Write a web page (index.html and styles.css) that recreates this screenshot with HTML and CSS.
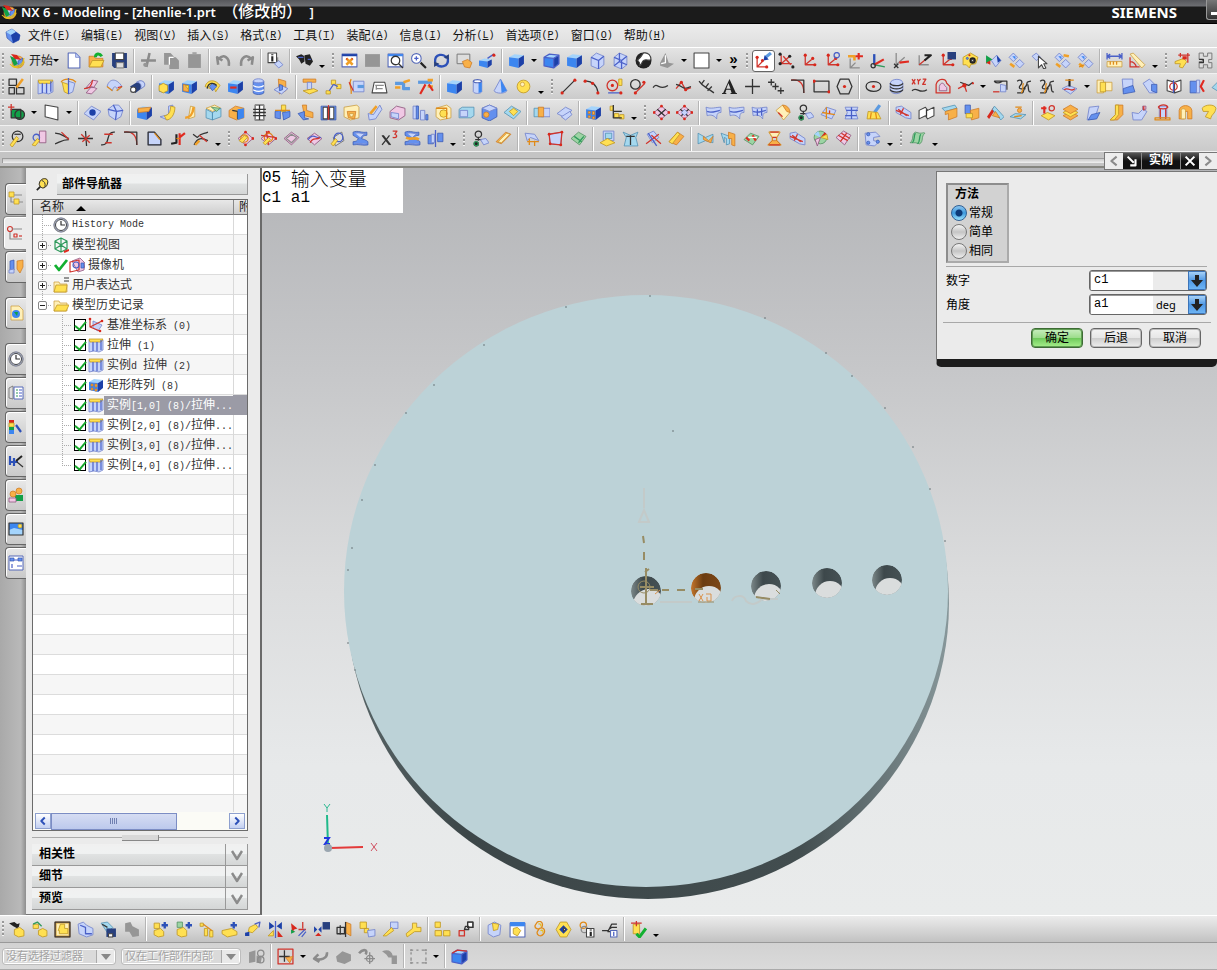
FILE: index.html
```
<!DOCTYPE html>
<html lang="zh-CN">
<head>
<meta charset="utf-8">
<title>NX 6 - Modeling</title>
<link rel="stylesheet" href="styles.css">
</head>
<body>
<div class="app">
  <header class="title">
    <span class="ico" data-icon="nx"></span>
    <h1>NX 6 - Modeling - [zhenlie-1.prt <span>（修改的） </span>]</h1>
    <span class="brand">SIEMENS</span>
    <button class="min" aria-label="最小化"></button>
  </header>

  <nav class="menu">
    <span class="ico" data-icon="part"></span>
    <button>文件<span class="lat">(<u>F</u>)</span></button>
    <button>编辑<span class="lat">(<u>E</u>)</span></button>
    <button>视图<span class="lat">(<u>V</u>)</span></button>
    <button>插入<span class="lat">(<u>S</u>)</span></button>
    <button>格式<span class="lat">(<u>R</u>)</span></button>
    <button>工具<span class="lat">(<u>T</u>)</span></button>
    <button>装配<span class="lat">(<u>A</u>)</span></button>
    <button>信息<span class="lat">(<u>I</u>)</span></button>
    <button>分析<span class="lat">(<u>L</u>)</span></button>
    <button>首选项<span class="lat">(<u>P</u>)</span></button>
    <button>窗口<span class="lat">(<u>O</u>)</span></button>
    <button>帮助<span class="lat">(<u>H</u>)</span></button>
  </nav>

  <div class="bar" role="toolbar" aria-label="标准">
    <button class="start"><span class="ico" data-icon="nx"></span>开始</button>
    <span class="tools" data-tools="v new open save | cut copy paste | undo redo | info | find V :: fit fitsel zoomwin zoom rotate pan persp | shade v shadeEdge shade wire wireDim contrast shadow v bg v >> :: *csysPick csysNodes csys csysRound csysPlane csysAbs csysXc csysSwap csysSave palette redPart parts pick partsUp partsDown | ruler protractor V :: clamp frame"></span>
  </div>
  <div class="bar" role="toolbar" aria-label="特征">
    <span class="tools" data-tools="sketch | extrude revolve sweep sweepTwo tube | boss pocket pad slot cylWire emboss | flange dart groove trapez bridge bridgeRed | cube cylinder cone sphere V :: line arc circ circTan wave spline fitcv text plus points corner rect polygon | ellipse helix xyz offset joint v project scurve scurve intersect v section wrap unwrap mirrorCv cylRed surfP"></span>
  </div>
  <div class="bar" role="toolbar" aria-label="特征操作">
    <span class="tools" data-tools="datum v plane v | hole gem | block blend blendLine chamfer draft spring trimBody split book shell thread body tubes thicken pill cubeHole pad2 | unite patch | array linkAxes V :: diamond diamondPt | sheet sheet sheetGrid rolled binocs sheetSun meshBlue broom | quilt bookOpen foldBox joinBox roof spot | axisY layers foldBlue foldGold bendArrow cage arch hook"></span>
  </div>
  <div class="bar last" role="toolbar" aria-label="曲线">
    <span class="tools" data-tools="wrench wrenchDoc trimCv cross ess corner quarter riser arcs V :: gearNet gearNetRed rhombus rhombusArc gearArc ribbon | xcubed ribbonGold mirrorB V :: binocs bar | sheetBend quadPt sheetGreen | spoon tee netRed barGold | bowtie stand sheetTeal pillar quilt rainbow rhombusGrid | cpoints V :: greenCv V"></span>
  </div>
  <div class="rail"><i></i></div>

  <main class="work">
    <nav class="tabs" aria-label="资源条">
      <button class="ico" data-icon="tAsm" aria-label="装配导航器"></button>
      <button class="ico on" data-icon="tPart" aria-label="部件导航器"></button>
      <button class="ico gap" data-icon="tReuse" aria-label="重用库"></button>
      <button class="ico gap" data-icon="tWeb" aria-label="浏览器"></button>
      <button class="ico" data-icon="clock" aria-label="历史记录"></button>
      <button class="ico" data-icon="tList" aria-label="系统材料"></button>
      <button class="ico" data-icon="tColor" aria-label="可视化"></button>
      <button class="ico" data-icon="tTools" aria-label="加工向导"></button>
      <button class="ico" data-icon="tUsers" aria-label="角色"></button>
      <button class="ico" data-icon="tScene" aria-label="场景"></button>
      <button class="ico" data-icon="tChart" aria-label="图表"></button>
    </nav>

    <aside class="panel">
      <div class="head"><span class="ico" data-icon="pin"></span><h2>部件导航器</h2></div>
      <div class="tree">
        <div class="rows">
          <table>
            <thead><tr><th>名称 <i class="up"></i></th><th class="c2">附</th></tr></thead>
            <tbody>
              <tr><td><div class="n"><span class="l1"></span><span class="ico" data-icon="clock"></span><span class="lat">History Mode</span></div></td><td></td></tr>
              <tr><td><div class="n"><span class="l1"><button class="ex" aria-label="展开"></button></span><span class="ico" data-icon="nViews"></span>模型视图</div></td><td></td></tr>
              <tr><td><div class="n"><span class="l1"><button class="ex" aria-label="展开"></button></span><span class="ico tight" data-icon="tick"></span><span class="ico" data-icon="nCam"></span>摄像机</div></td><td></td></tr>
              <tr><td><div class="n"><span class="l1"><button class="ex" aria-label="展开"></button></span><span class="ico" data-icon="folderEq"></span>用户表达式</div></td><td></td></tr>
              <tr><td><div class="n"><span class="l1 end"><button class="ex minus" aria-label="折叠"></button></span><span class="ico" data-icon="folder"></span>模型历史记录</div></td><td></td></tr>
              <tr><td><label class="n"><span class="l2"></span><input type="checkbox" checked><span class="ico tight" data-icon="nCsys"></span><span class="t">基准坐标系<span class="lat"> (0)</span></span></label></td><td></td></tr>
              <tr><td><label class="n"><span class="l2"></span><input type="checkbox" checked><span class="ico tight" data-icon="extrude"></span><span class="t">拉伸<span class="lat"> (1)</span></span></label></td><td></td></tr>
              <tr><td><label class="n"><span class="l2"></span><input type="checkbox" checked><span class="ico tight" data-icon="extrude"></span><span class="t">实例<span class="lat">d </span>拉伸<span class="lat"> (2)</span></span></label></td><td></td></tr>
              <tr><td><label class="n"><span class="l2"></span><input type="checkbox" checked><span class="ico tight" data-icon="array"></span><span class="t">矩形阵列<span class="lat"> (8)</span></span></label></td><td></td></tr>
              <tr class="sel"><td><label class="n"><span class="l2"></span><input type="checkbox" checked><span class="ico tight" data-icon="extrude"></span><span class="t">实例<span class="lat">[1,0] (8)/</span>拉伸<span class="lat">...</span></span></label></td><td></td></tr>
              <tr><td><label class="n"><span class="l2"></span><input type="checkbox" checked><span class="ico tight" data-icon="extrude"></span><span class="t">实例<span class="lat">[2,0] (8)/</span>拉伸<span class="lat">...</span></span></label></td><td></td></tr>
              <tr><td><label class="n"><span class="l2"></span><input type="checkbox" checked><span class="ico tight" data-icon="extrude"></span><span class="t">实例<span class="lat">[3,0] (8)/</span>拉伸<span class="lat">...</span></span></label></td><td></td></tr>
              <tr><td><label class="n"><span class="l2 end"></span><input type="checkbox" checked><span class="ico tight" data-icon="extrude"></span><span class="t">实例<span class="lat">[4,0] (8)/</span>拉伸<span class="lat">...</span></span></label></td><td></td></tr>
            </tbody>
          </table>
        </div>
        <div class="scroll"><button aria-label="向左" data-icon="chevL"></button><span class="thumb"></span><button class="right" aria-label="向右" data-icon="chevR"></button></div>
      </div>
      <div class="split"><i></i></div>
      <button class="sect"><span>相关性</span><span class="ico" data-icon="vee"></span></button>
      <button class="sect"><span>细节</span><span class="ico" data-icon="vee"></span></button>
      <button class="sect"><span>预览</span><span class="ico" data-icon="vee"></span></button>
    </aside>

    <section class="view">
      <svg class="model" viewBox="262 168 955 747" role="img" aria-label="圆盘模型">
        <defs>
          <linearGradient id="edge" x1="0" y1="0" x2="1" y2="0">
            <stop offset="0" stop-color="#596668"/><stop offset=".2" stop-color="#3c4648"/><stop offset=".75" stop-color="#424d4f"/><stop offset="1" stop-color="#87979a"/>
          </linearGradient>
          <linearGradient id="bore" x1="0" y1="0" x2="1" y2="0">
            <stop offset="0" stop-color="#7c8889"/><stop offset=".4" stop-color="#3d484b"/><stop offset="1" stop-color="#465255"/>
          </linearGradient>
          <linearGradient id="boreSel" x1="0" y1="0" x2="1" y2="0">
            <stop offset="0" stop-color="#c4762c"/><stop offset=".4" stop-color="#6b3c10"/><stop offset="1" stop-color="#7d4717"/>
          </linearGradient>
          <clipPath id="hole"><circle r="15"/></clipPath>
        </defs>
        <ellipse cx="648" cy="603" rx="301" ry="296" fill="url(#edge)"/>
        <ellipse cx="646" cy="591" rx="302" ry="296" fill="#bcd2d7"/>
        <g transform="translate(646 591)"><g clip-path="url(#hole)"><circle r="15" fill="url(#bore)"/><circle cx="3" cy="14" r="16" fill="#dadddd"/></g></g>
        <g transform="translate(706 588)"><g clip-path="url(#hole)"><circle r="15" fill="url(#boreSel)"/><circle cx="3" cy="13" r="15" fill="#dadddd"/></g></g>
        <g transform="translate(766 586)"><g clip-path="url(#hole)"><circle r="15" fill="url(#bore)"/><circle cx="3" cy="13" r="15" fill="#dadddd"/></g></g>
        <g transform="translate(827 583)"><g clip-path="url(#hole)"><circle r="15" fill="url(#bore)"/><circle cx="3" cy="13" r="15" fill="#dadddd"/></g></g>
        <g transform="translate(887 580)"><g clip-path="url(#hole)"><circle r="15" fill="url(#bore)"/><circle cx="3" cy="13" r="15" fill="#dadddd"/></g></g>
        <g fill="none" stroke="#c3cac9" stroke-width="2"><path d="M644 488v20M639 522l5-12 5 12zM660 602h32M732 601c2-6 12-7 14 0 5 5 12 3 16-2h16"/></g>
        <g fill="none" stroke="#978c64" stroke-width="2"><path d="M643 536l1 7M644 552v8M646 568v36M641 604h12M650 590h8M662 590h7M677 590h8M695 589h8M756 597l14 2M645 572l4-3M640 587h14"/><circle cx="644" cy="587" r="6" stroke-width="1"/></g>
        <path d="M699 594l4 7M703 594l-4 7M706 594h5v7h-4v-4M655 594l5-4" fill="none" stroke="#d9924c"/>
        <path d="M698 602h16" stroke="#978c64"/>
        <path d="M776 590l4 4" stroke="#978c64"/>
        <path d="M649 296h2M565 307h2M483 345h2M433 385h2M405 413h2M374 465h2M361 500h2M351 548h2M347 570h2M764 318h2M825 353h2M851 376h2M884 408h2M912 447h2M929 489h2M944 541h2M672 431h2M347 643h2M354 670h2" stroke="#6a777a"/>
        <g fill="none" stroke-width="2"><path d="M327 815l1 31" stroke="#1fb98a"/><path d="M330 848l33-1" stroke="#e33a3a"/><path d="M324 838h5l-4 6h5" stroke="#2137e0"/></g>
        <circle cx="328" cy="848" r="4" fill="#9aa6b0"/>
        <path d="M324 804l3 4 3-4M327 808v4" fill="none" stroke="#2ab890"/>
        <path d="M371 843l6 8M377 843l-6 8" stroke="#d05060"/>
      </svg>
      <p class="note"><span><i>05 </i>输入变量</span><span><i>c1 a1</i></span></p>
      <div class="dlgbar">
        <button aria-label="上一个" data-icon="lt"></button><button class="dark" aria-label="停靠" data-icon="arrowSE"></button><strong>实例</strong><button class="dark" aria-label="关闭" data-icon="close"></button><button aria-label="下一个" data-icon="gt"></button>
      </div>
      <form class="dlg">
        <div class="body">
          <fieldset>
            <b>方法</b>
            <label><input type="radio" name="m" checked>常规</label>
            <label><input type="radio" name="m">简单</label>
            <label><input type="radio" name="m">相同</label>
          </fieldset>
          <div class="fields">
            <div class="row"><label for="num">数字</label><span class="field"><input id="num" value="c1"><span></span><button type="button" aria-label="数字选项" data-icon="down"></button></span></div>
            <div class="row"><label for="ang">角度</label><span class="field"><input id="ang" value="a1"><span>deg</span><button type="button" aria-label="角度选项" data-icon="down"></button></span></div>
          </div>
        </div>
        <div class="acts"><button type="button" class="ok">确定</button><button type="button">后退</button><button type="button">取消</button></div>
      </form>
    </section>
  </main>

  <div class="bar foot" role="toolbar" aria-label="装配">
    <span class="tools" data-tools="aFind aOpen aBox aOutline aSave aGrey | aAdd aAdd2 aPins aPlate aMove mirrorTri constrain mirrorSave aSection aReplace aWrench aWrench2 | aSeq chain | aBody aWindow link lozenge linkInfo treeInfo | aCheck V"></span>
  </div>
  <div class="bar status" role="toolbar" aria-label="选择">
    <span class="combo"><select disabled aria-label="类型过滤器"><option>没有选择过滤器</option></select></span>
    <span class="combo wide"><select disabled aria-label="选择范围"><option>仅在工作部件内部</option></select></span>
    <span class="tools" data-tools="gLink | snap v back gBlob gCross gPipe | marquee v | cubeTop"></span>
  </div>
</div>
<script src="icons.js"></script>
</body>
</html>
```
FILE: styles.css
```
* { box-sizing: border-box; }
body {
  margin: 0;
  font: 12px/16px "Liberation Sans", "Noto Sans CJK SC", sans-serif;
  color: #222;
  background: #d6d6d6;
}
button { font: inherit; color: inherit; border: 0; padding: 0; background: none; }
h1, h2, p { margin: 0; font-weight: normal; }
svg { display: block; }
.app { display: flex; flex-direction: column; height: 100vh; min-height: 600px; overflow: hidden; }
.ico { display: inline-flex; flex: none; align-items: center; justify-content: center; }
.lat { font: 10px/16px "Liberation Mono", monospace; white-space: pre; }

.title {
  display: flex; align-items: center; height: 24px; flex: none; padding-left: 1px; gap: 4px;
  color: #fff; background: linear-gradient(#57585c, #6d6e72 6px, #1b1b1b 7px, #1b1b1b 23px, #000 23px);
}
.title h1 { flex: 1; font: 600 13px/22px "Noto Sans", "Noto Sans CJK SC", sans-serif; white-space: nowrap; }
.title h1 span { font-size: 16px; line-height: 20px; font-weight: 500; padding: 0 3px; }
.brand { font: bold 15px/22px "Noto Sans", sans-serif; margin-right: 25px; }
.min { width: 11px; height: 20px; align-self: flex-start; border: 1px solid #999; border-width: 0 0 1px 1px; border-radius: 0 0 0 3px; background: linear-gradient(#fff, #fff) 4px 12px / 8px 3px no-repeat, linear-gradient(#777, #333); }

.menu { display: flex; align-items: center; height: 24px; flex: none; padding-left: 5px; gap: 11px; background: linear-gradient(#ececec, #dedede); border-bottom: 1px solid #fff; color: #111; }
.menu > .ico { margin-right: -4px; }
.menu button { display: flex; }

.bar { display: flex; align-items: center; height: 26px; flex: none; overflow: hidden; padding-left: 5px; background: linear-gradient(#e4e4e4, #cbcbcb); border-bottom: 1px solid #f1f1f1; position: relative; }
.bar::before, .grip { content: ""; background: repeating-linear-gradient(#999 0 2px, #f4f4f4 2px 3px, transparent 3px 4px); }
.bar::before { position: absolute; left: 2px; top: 5px; width: 2px; height: 16px; }
.bar.last { background: linear-gradient(#dadada, #cacaca); }
.start { display: flex; align-items: center; gap: 4px; width: 45px; padding-left: 3px; white-space: nowrap; }
.start .ico { width: 17px; }
.tools { display: flex; align-items: center; flex: none; height: 26px; }
.tool { display: flex; align-items: center; justify-content: center; width: 23px; height: 23px; flex: none; }
.tool svg { width: 17px; height: 17px; }
.tool.pressed { background: #fff; border: 1px solid #666; border-radius: 3px; height: 22px; }
.sep { width: 2px; height: 24px; margin: 0 2px; border-left: 1px solid #b5b5b5; border-right: 1px solid #fff; }
.caret { width: 12px; height: 23px; display: flex; align-items: center; justify-content: center; }
.caret::after, .more::after { content: ""; border: 3px solid transparent; border-top-color: #000; border-bottom: 0; }
.caret.low { align-items: flex-end; padding-bottom: 4px; }
.grip { width: 2px; height: 16px; margin: 0 4px; }
.more { width: 17px; height: 23px; display: flex; flex-direction: column; align-items: center; justify-content: center; font: bold 15px/11px "Liberation Sans", sans-serif; gap: 2px; color: #000; }
.rail { flex: none; height: 16px; padding: 6px 0 0 2px; background: #c4c4c4; border-bottom: 2px solid #85857f; }
.rail i { display: block; height: 5px; background: linear-gradient(#c9c9c9, #f0f0f0); border-top: 1px solid #9b9b9b; border-left: 1px solid #9b9b9b; }

.work { display: flex; flex: 1; min-height: 0; position: relative; }
.tabs { width: 26px; flex: none; display: flex; flex-direction: column; align-items: flex-end; gap: 2px; padding-top: 15px; background: linear-gradient(90deg, #a9a9a9, #b9b9b9 80%, #8e8e8e); }
.tabs button { width: 21px; height: 32px; border: 1px solid #666; border-right: 0; border-radius: 4px 0 0 4px; background: linear-gradient(#e8e8e8, #c9c9c9); box-shadow: inset 1px 1px 0 #fff; }
.tabs .on { width: 23px; height: 34px; background: #ebebeb; border-color: #888; margin: -1px 0; }
.tabs .gap { margin-bottom: 12px; }

.panel { width: 236px; flex: none; display: flex; flex-direction: column; padding: 5px 12px 4px 6px; background: #ebebeb; border-right: 2px solid #6a6a6a; border-bottom: 1px solid #777; }
.head { display: flex; align-items: center; height: 22px; margin-bottom: 4px; }
.head .ico { width: 20px; margin-right: 5px; }
.head svg { width: 13px; height: 13px; }
.head h2, .sect { background: linear-gradient(#f0f0f0, #f0f2f2 45%, #e0e2e2 50%, #d4d6d6); }
.head h2 { flex: 1; font: bold 12px/20px "Liberation Sans", "Noto Sans CJK SC", sans-serif; padding-left: 5px; color: #000; border: 1px solid #999; border-width: 0 1px 1px 0; }
.tree { flex: 1; min-height: 0; display: flex; flex-direction: column; border: 1px solid #6b6b6b; background: #fff; }
.rows { flex: 1; min-height: 0; overflow: hidden; background: linear-gradient(#d9d9d9, #d9d9d9) 200px 15px / 1px 100% no-repeat, repeating-linear-gradient(#fff 0 19px, #dcdcdc 19px 20px, #f6f6f6 20px 39px, #dcdcdc 39px 40px) 0 15px; }
table { width: 100%; table-layout: fixed; border-collapse: separate; border-spacing: 0; }
th { height: 15px; padding: 0 0 0 7px; font-weight: normal; text-align: left; line-height: 14px; background: linear-gradient(#e8e8e8, #cfcfcf); border-bottom: 1px solid #777; white-space: nowrap; overflow: hidden; }
.c2 { width: 14px; padding-left: 5px; border-left: 1px solid #888; }
.up { display: inline-block; border: 5px solid transparent; border-bottom-color: #000; border-top: 0; margin-left: 9px; }
td { padding: 0; height: 20px; }
.n { display: flex; align-items: center; height: 20px; white-space: nowrap; color: #333; }
.n .ico { width: 16px; margin-right: 3px; }
.n .tight { margin-right: 0; }
.l1, .l2 { height: 20px; flex: none; display: flex; align-items: center; background: repeating-linear-gradient(#aaa 0 1px, transparent 1px 2px) 9px 0 / 1px 100% no-repeat, repeating-linear-gradient(90deg, #aaa 0 1px, transparent 1px 2px) 9px 10px / 10px 1px no-repeat; }
.l1 { width: 20px; }
.l2 { width: 41px; background-position: 29px 0, 29px 10px; }
.end { background-size: 1px 50%, 10px 1px; }
.ex { width: 9px; height: 9px; margin-left: 5px; border: 1px solid #888; border-radius: 2px; background: linear-gradient(#222, #222) 50% 50% / 5px 1px no-repeat, linear-gradient(#222, #222) 50% 50% / 1px 5px no-repeat, #fff; }
.minus { background: linear-gradient(#222, #222) 50% 50% / 5px 1px no-repeat, #fff; }
.n input { appearance: none; width: 12px; height: 12px; margin: 0 2px 0 0; flex: none; border: 1px solid #000; background: #fff; position: relative; }
.n input:checked::after { content: ""; position: absolute; left: 2px; top: -1px; width: 5px; height: 9px; border: solid #17a82c; border-width: 0 2px 2px 0; transform: rotate(40deg); }
.n .t { flex: 1; line-height: 19px; padding-left: 3px; }
.sel .t, .sel td + td { background: #9b9ba6; color: #fff; }
.scroll { display: flex; align-items: center; height: 18px; padding: 0 2px; flex: none; background: #fbfbf6; }
.scroll button { width: 16px; height: 16px; border: 1px solid #8ea0cf; background: linear-gradient(#fff, #c3d0f1); }
.scroll button svg { width: 14px; height: 14px; }
.scroll .right { margin-left: auto; }
.thumb { width: 60%; height: 17px; border: 1px solid #7c8dc4; background: repeating-linear-gradient(90deg, #7080b0 0 1px, transparent 1px 2px) 50% 50% / 8px 6px no-repeat, linear-gradient(#d6ddf3, #bcc9ec); }
.split { height: 13px; flex: none; display: flex; justify-content: center; padding-top: 4px; background: linear-gradient(#aaa, #aaa) 0 6px / 100% 1px no-repeat; }
.split i { width: 37px; height: 6px; background: #d8d8d8; border: 1px solid #888; border-width: 0 1px 1px 0; }
.sect { display: flex; align-items: stretch; height: 22px; flex: none; width: 100%; text-align: left; font-weight: bold; line-height: 20px; padding-left: 7px; color: #000; border: 1px solid #999; border-width: 0 1px 1px 0; }
.sect span:first-child { flex: 1; }
.sect .ico { width: 22px; border-left: 1px solid #999; }

.view { flex: 1; min-width: 0; position: relative; background: linear-gradient(#b4b5b8, #c6c7c9 27%, #dbdcdd 55%, #e7e9ea 80%, #e9ebeb); }
.model { width: 100%; height: 100%; }
.note { position: absolute; left: 0; top: 0; width: 141px; height: 45px; background: #fff; color: #000; font: 300 19px/20px "Noto Sans CJK SC", sans-serif; }
.note span { display: flex; align-items: center; height: 20px; }
.note i { font: 16px/20px "Liberation Mono", monospace; white-space: pre; }

.dlgbar { position: absolute; right: 0; top: -16px; display: flex; height: 18px; border: 1px solid #777; border-right: 0; background: #222; }
.dlgbar button { width: 18px; display: flex; align-items: center; justify-content: center; background: #ededed; }
.dlgbar svg { width: 14px; height: 14px; }
.dlgbar .dark { background: linear-gradient(#555, #111 50%); }
.dlgbar strong { width: 40px; text-align: center; line-height: 15px; color: #fff; background: linear-gradient(#555, #111 50%); border: 1px solid #888; border-width: 0 1px; }
.dlg { position: absolute; right: 0; top: 3px; width: 281px; background: #ebebeb; border: 1px solid #777; border-right: 0; border-bottom: 8px solid #1c1c1c; border-radius: 0 0 5px 5px; color: #000; }
.body { padding: 11px 10px 0 9px; }
fieldset { margin: 0; width: 63px; height: 80px; padding: 1px 3px; border: 2px solid #999; border-color: #8d8d8d #aaa #aaa #8d8d8d; background: #d2d2d2; display: flex; flex-direction: column; }
fieldset b { padding-left: 4px; height: 18px; line-height: 16px; }
fieldset label { display: flex; align-items: center; height: 19px; gap: 2px; white-space: nowrap; }
fieldset input { appearance: none; width: 16px; height: 16px; margin: 0; flex: none; border: 1px solid #777; border-radius: 50%; background: linear-gradient(#f4f4f4, #c4c4c4 50%, #eee); }
fieldset input:checked { background: radial-gradient(circle, #0d3a78 0 3px, transparent 4px), linear-gradient(#8cc4ee, #3d9ade 50%, #9be0fb); border-color: #2f5f94; }
.fields { border-top: 1px solid #a8a8a8; margin-top: 3px; padding: 3px 0 7px; display: flex; flex-direction: column; gap: 3px; }
.row { display: flex; justify-content: space-between; align-items: center; height: 21px; }
.field { display: flex; width: 118px; height: 21px; border: 1px solid #666; border-radius: 3px; overflow: hidden; box-shadow: inset 1px 1px 0 #999; }
.field input { width: 62px; border: 0; padding: 0 0 2px 3px; font: 12px "Liberation Mono", monospace; margin: 1px 0 0 1px; min-width: 0; outline: 0; }
.field span { flex: 1; padding-left: 3px; font: 11px/20px "Noto Sans", sans-serif; }
.field button { width: 18px; display: flex; align-items: center; justify-content: center; background: linear-gradient(#a8d2f8, #4f98e4 50%, #6db4f4); border: 1px solid #3c74b8; }
.acts { display: flex; justify-content: flex-end; gap: 7px; margin: 0 6px; padding: 5px 10px 11px 0; border-top: 1px solid #a8a8a8; }
.acts button { width: 52px; height: 20px; line-height: 17px; border: 1px solid #666; border-radius: 4px; background: linear-gradient(#f4f4f4, #e6e6e6 50%, #cecece 52%, #eee); box-shadow: inset 0 0 0 1px #bbb; }
.acts .ok { background: linear-gradient(#c9eec0, #9bdc8a 50%, #6fca5c 52%, #a8f08c); border-color: #3d6b34; box-shadow: inset 0 0 0 1px #5f9c53; }

.foot { height: 28px; border-top: 1px solid #fff; background: linear-gradient(#ececec, #c2c2c2); border-bottom: 1px solid #999; }
.status { height: 27px; padding-left: 3px; background: linear-gradient(#d2d2d2, #dadada); border-bottom: 1px solid #aaa; }
.status::before { display: none; }
.combo { position: relative; display: flex; width: 112px; height: 15px; margin-right: 7px; border: 1px solid #fff; border-radius: 3px; box-shadow: 0 0 0 1px #bdbdbd; }
.wide { width: 118px; margin-right: 5px; }
.combo select { appearance: none; width: 100%; border: 0; padding: 0 18px 0 2px; background: #dadada; color: #a3a3a3; opacity: 1; text-shadow: 1px 1px 0 #fff; font: 11px/13px "Liberation Sans", "Noto Sans CJK SC", sans-serif; }
.combo::before { content: ""; position: absolute; right: 0; top: 0; width: 17px; height: 13px; background: #e9e9e9; border-left: 1px solid #aaa; z-index: 1; }
.combo::after { content: ""; position: absolute; right: 3px; top: 4px; border: 5px solid transparent; border-top: 6px solid #888; border-bottom: 0; z-index: 1; }

/* icon paints */
.i path, .i circle { fill: none; stroke-width: 1.2; stroke-linejoin: round; }
.i .sk { stroke: #333; } .i .sr { stroke: #d0342c; } .i .sb { stroke: #4a60c8; } .i .sg { stroke: #2f9a5c; }
.i .so { stroke: #e08a18; } .i .sn { stroke: #8b8b8b; } .i .sw { stroke: #fff; } .i .sy { stroke: #e6c020; }
.i .tk { stroke: #222; stroke-width: 2; } .i .tr { stroke: #e02a20; stroke-width: 2; } .i .tb { stroke: #2c50b8; stroke-width: 2.2; }
.i .tn { stroke: #8b8b8b; stroke-width: 2.4; } .i .tg { stroke: #12b030; stroke-width: 2.8; } .i .tw { stroke: #fff; stroke-width: 2.4; }
.i .to { stroke: #f0a028; stroke-width: 2.4; } .i .tt { stroke: #5c9ae0; stroke-width: 3; }
.i .fk { fill: #222; } .i .fr { fill: #d8281c; } .i .fn { fill: #969696; } .i .fg { fill: #12a048; }
.i .fb { fill: #6490ee; stroke: #3858b0; stroke-width: 0.7; }
.i .fd { fill: #28407e; } .i .b1 { fill: #a4d4fc; } .i .b2 { fill: #3c86f0; } .i .b3 { fill: #1c40a8; }
.i .fl { fill: #c6d4fa; stroke: #7484cc; stroke-width: 0.8; }
.i .ft { fill: #a4d8ee; stroke: #4c8cb0; stroke-width: 0.7; }
.i .fy { fill: #ffe052; stroke: #c09a28; stroke-width: 0.8; }
.i .fo { fill: #f8b048; stroke: #cc7824; stroke-width: 0.7; }
.i .fc { fill: #fff0b8; stroke: #c89838; stroke-width: 0.7; }
.i .fp { fill: #f0c8e4; stroke: #905880; stroke-width: 0.8; }
.i .fe { fill: #9cd4a4; stroke: #4c8c5c; stroke-width: 0.7; }
.i .fw { fill: #fff; stroke: #444; stroke-width: 1; }
.i .fs { fill: #fff; stroke: #5468b8; stroke-width: 1; }
.i .fq { fill: #ddd; stroke: #777; stroke-width: 0.9; }
```
FILE: icons.js
```
/* Each icon is a list of "paint geometry" parts on a 16x16 grid.
   "o x y r" is a circle, "@name" includes another icon, anything else is path data. */
const ICONS = {
  cube: 'b1 M1 5l5-3 9 1-5 3z;b2 M1 5l9 1v9l-9-2z;b3 M10 6l5-3v8l-5 4z',
  nx: 'fo o 9 9 6;fl o 9 9 4;fg M1 3l5 2 3 6-4 2z;fb M9 8l5-3-1 7-4 2z;fr M2 1l6 1 4 5-6-1z;sy M1 11c4 5 13 2 14-6;sy M3 13c4 3 10 1 12-4',
  part: 'fb M1 4l6-3 8 6-1 5-6 3-6-5z;b1 M1 4l6-3 4 3-5 3z;b3 M6 7l5-3 4 3-1 5-6 3z',
  new: 'fs M3 1h7l4 4v10H3z;fl M10 1v4h4z',
  open: 'fo M1 4h5l1 2h7v8H1z;fy M4 8h11l-3 6H1z;tg M7 5c0-4 4-4 6-1',
  save: 'fd M1 1h14v14H3l-2-2z;fw M4 1h8v6H4z;fq M5 10h7v5H5z',
  cut: 'tn M1 8h14M9 1L6 14;fn o 5 12 2', copy: 'fn M1 1h6l3 3v8H1z;fn M6 5h6l3 3v8H6z;sw M6 12V5h4', paste: 'fn M2 2h12v13H2z;sn M6 1h4',
  undo: 'tn M3 12L2 5l5 3M3 7c5-6 11-2 10 6', redo: 'tn M13 12l1-7-5 3M13 7C8 1 2 5 3 13',
  info: 'fw M1 1h8v9H1z;tk M5 4v5M5 2v1;fl M7 11l4-3 4 4-4 3z;sn M10 5v4',
  find: 'fk M0 4l5-2 3 2v5l-3 2-2-4z;fk M8 3l5-1 3 7-3 4-4-2z;sb M2 5h5M11 7h3',
  fit: 'fs M1 2h14v12H1z;b3 M1 2h14v2H1z;to M5 6l6 6M11 6l-6 6;sr M5 6l1 1M11 6l-1 1', fitsel: 'fn M1 2h14v12H1z',
  zoomwin: 'fs M1 2h14v12H1z;b2 M1 2h14v2H1z;sk o 8 8 4;sk M11 11l4 4', zoom: 'fs o 6 6 4.500;sb M6 4v4M4 6h4;tk M10 10l5 5',
  rotate: 'tb M2 10c-1-9 9-9 11-4M14 6c1 9-8 9-11 5;fd M10 5l5 2V2z;fd M6 11l-5-2v5z', pan: 'fq M1 2h12v9H1z;fo M8 14l-2-5 5-2 4 3-2 5z', persp: 'b1 M0 8l5-2 7 1-4 2z;b2 M0 8l8 1v6l-8-2z;b3 M8 9l4-2v5l-4 3z;sb M8 6l6-4;fr o 14 3 1.500',
  shade: '@cube', shadeEdge: '@cube;sb M1 5l5-3 9 1-5 3zM1 5v8l9 2 5-4V3M10 6v9', wire: 'fl M2 5l5-4 7 3v8l-5 4-7-3z;sb M2 5l7 3 5-4M9 8v8', wireDim: '@wire;sb M7 1v8l7 3M7 9l-5 4',
  contrast: 'fk o 8 8 7.500;fw M8 1c5-1 7 3 7 6-2 2-4-1-7 1-2 1-1 4-4 5 2-4-3-5-1-6 3-2 3-4 5-6z', shadow: 'fn M2 10l5-9 3 9 5 1-6 4-7-2z;sw M7 3v7l-4 1', bg: 'fw M1 1h14v14H1z',
  csys: 'sr M4 3v9h9M4 12l6-5;fr o 4 3 1.500;fr o 13 12 1.500;fr o 11 6 1.500', csysPick: 'sr M2 5v9h9M2 14l5-5;fr o 2 5 1.500;fr o 11 14 1.500;fr o 7 8 1.500;tt M10 5l5-4;b3 M9 3l4 4-5 1z',
  csysNodes: 'sr M3 3v8h10M5 4l7 8M3 11l8-7;fk o 2 2 1.500;fk o 11 4 1.500;fk o 2 11 1.500;fk o 14 14 1.500', csysRound: '@csys;sb o 12 3 2.500', csysPlane: 'sn M3 6v9h9M3 15l5-5;to M1 4h6v4;tr M8 4h7M11 1v6', csysAbs: 'sg M4 12l10 2;tb M4 12V2;tr M4 12l9-5;sk o 3 13 2', csysXc: 'sn M3 1v11l8-7;tr M6 10l9-1;sk M1 15l4-4M5 15l-4-4', csysSwap: 'sn M3 3v9h9;sr M3 12l6-5;tk M8 3h6l-6 5', csysSave: '@csys;fd M8 0h8v7H8z',
  palette: 'fy M1 5l7-4 7 4-2 6-5 1-1 3-3-3H1z;fb o 5 6 1;fr o 7 3 1;fk o 10 8 3;fw o 10 8 1', redPart: 'fg M1 3l6 4-6 4z;fr M1 10l4-2v4z;fl M6 8l5-5 4 5-5 6z;b3 M11 3l4 5-3 2z',
  parts: 'fl M1 5l4-4 4 4-4 4z;fl M7 11l4-4 4 4-4 4z;b2 M4 4h3v3z;to M2 11l4 3', pick: 'fl M1 4l4-3 4 4-4 3z;fw M7 4v11l3-3 2 4 2-1-2-4h3z', partsUp: '@parts;to M9 3l5 1', partsDown: '@parts;so M2 14l5-2',
  ruler: 'fc M1 9h14v5H1z;sb M1 4h14M1 1v6M15 1v6M4 2L1 4l3 2M12 2l3 2-3 2;so M4 9v3M7 9v3M10 9v3', protractor: 'fc M1 2l3-1 11 11-3 3z;sr M1 5v9h9M1 9c3 0 5 2 6 5', clamp: 'fy M1 9l8-3 3 3-4 6-3-1 1-3H1z;sr M4 3h11M6 1v4M13 1v9;fr M8 4h4v3H8z', frame: 'fq M2 1h4v3h4V1h4v6h-3v3h3v5h-4v-3H6v3H2V9h3V7H2z;sk M2 7h4v3H2',
  sketch: 'sk M1 1h7v6H1zM1 9h5v6H1zM8 9h7v6H8z;to M8 9l6-8', extrude: 'fl M1 3h14v10l-4 2-5-1-5 1z;fy M1 2h14l-2 3H2z;sb M5 5v9M9 5v9M13 3v10', revolve: 'fy M2 4l6 2v9l-4-2z;fl M8 3l6 2-2 8-4 2z;so M1 4c2-4 11-4 14 0;sb M8 0v15', sweep: 'fp M3 9l6-7 5 1-4 6zM3 14l5-6 5 2-5 5z;sr M1 10c5 0 7-2 8-8', sweepTwo: 'fl M1 8c2-8 9-8 14 0l-4 4c-1-5-4-5-5 0z;so M1 8l5 4M10 12l5-4;sr M11 9l4-1',
  tube: 'fd M1 8l8-5c5-2 8 4 4 6l-7 5z;fl M9 3c5-2 8 4 4 6l-2 1c1-3 0-6-4-6z;fw o 4 11 2.500', boss: '@cube;fy M1 7l4-2 4 2v5l-4 2-4-2z', pocket: '@cube;fo M2 6l5 1v6l-5-1z;fy M4 7h3v4z', pad: 'fy M1 8c2-7 10-7 14-1l-4 6c-1-4-3-5-5-3z;fb M5 8l3-3 4 3-4 4z;sk M3 10c1-6 6-6 9-3', slot: '@cube;tr M3 9h6', cylWire: 'fb M3 3v11c2 2 8 2 10 0V3z;fl M3 3c1-3 9-3 10 0-1 2-9 2-10 0z;sw M3 7c3 2 8 2 10 0M3 11c3 2 8 2 10 0', emboss: 'fo M5 1l7 2v9l-6 3z;fl M1 11l7-4 6 3-6 5z;fb M6 6l3 1v4l-3 1z',
  flange: 'fo M1 1h12v3H1z;fl M5 4h4v7H5z;fy M1 12l10-2 4 2-8 3z', dart: 'fy M6 2h4v4H6zM11 6h4v4h-4zM1 12h4v3H1z;sb M8 6l-4 6M8 6l4 2', groove: 'fl M5 3h10v10H5z;so M3 1c-3 5 1 9 0 14;sr M1 4l4 8;tt M9 8h6', trapez: 'fw M3 4h10l2 10H1z;sn M4 7h8M5 10h6M5 7v4', bridge: 'tt M1 5h8v5h6;to M9 4l6-2M1 9h5', bridgeRed: 'tt M1 4h13;to M10 2h5M10 8h5;tr M3 15l5-9M11 6l4 6',
  cylinder: 'fl M4 3v10c1 2 7 2 8 0V3z;b2 M9 4h3v9l-3 1z;fs M4 3c1-2 7-2 8 0-1 2-7 2-8 0z', cone: 'fl M8 1L2 12c1 3 11 3 12 0z;b2 M8 1l6 11-5 2z', sphere: 'fy o 8 8 6;fc o 7 6 2',
  line: 'sk M2 14L14 2;fr o 2 14 1.500;fr o 14 2 1.500', arc: 'sk M2 3c6-1 11 4 12 10;fr o 2 3 1.500;fr o 9 5 1.500;fr o 14 14 1.500', circ: 'sr o 6 7 5;fr o 6 7 1.500;fy M12 1h3v6h-3z;sb M2 14h12;fr o 14 14 1.500', circTan: 'sk o 6 6 4.500;sr M6 14l9-9;fr o 6 14 1.500;fr o 14 4 1.500', wave: 'sk M1 9c4-6 6 4 14-2', spline: 'sr M1 10l5-6 4 7 5-2;sk M1 6c8 2 5 6 14 2;fr o 6 4 1.500;fr o 10 11 1.500', fitcv: 'sk M1 3c3 5 6 5 14 11M3 6l3-4M7 9l3-4M9 12l4-4',
  text: 'fk M8 1l6 13h1v1h-6v-1h1l-1-3H5l-1 3h1v1H1v-1h1zM7 5l-2 5h4z', plus: 'sk M8 1v14M1 8h14', points: 'sk M4 1v6M1 4h6M8 5v6M5 8h6M13 9v6M10 12h6', corner: 'sr M1 2c8-1 12 3 12 12;sk M1 2h12v12', rect: 'sk M1 3h14v10H1z;fr o 1 3 1.500;fr o 15 13 1.500', polygon: 'sk M4 1h8l3 7-3 7H4L1 8z;fr o 8 8 1.500', ellipse: 'sk M1 8c0-6 14-6 14 0s-14 6-14 0z;fr o 8 8 1.500',
  helix: 'fl M2 5c1-5 12-5 12 0v6c-2 5-11 5-12 0z;sk M2 5c1 3 10 3 12 0M2 8c2 3 10 3 12 0M2 11c2 3 10 3 12 0', xyz: 'sr M1 1l3 5M4 1L1 6M6 1l1 2 2-2M7 3v3M11 1h3l-3 5h3;sk M1 12c4-5 7 4 14-1', offset: 'sr M2 14V6c2-6 9-6 10-1l3 3v6z;fp M5 12V8c1-4 4-4 5-1l2 2v3z', joint: 'sr M1 10l6-3 2 6;sk M3 4l8 3 4-3;fr o 7 7 2;fr o 15 5 1', project: 'sk M2 3h12v8M2 3c4 4 7 0 8 0;fl M8 6l5 1v6H8z;sr M1 13h6', scurve: 'sk M2 3c4-3 6 1 3 4s2 5 5 1-1-4 5-5M2 14h5c2-1 0-4 3-4M12 6c1 3 0 8 3 7;so M8 5c-2 4 1 5-2 9', intersect: 'fl M1 10l6-3 8 3-6 5z;sr M3 11c4-3 7 3 10-1;tk M8 1v7;so M4 2h8',
  section: 'fc M1 2h6v12H1zM8 4h7v8H8z;fy M4 4h5v9H4z', wrap: 'fl M3 1h10v9l-9 3z;fb M4 10l9-3 2 6-11 2z', unwrap: 'fl M1 5l6-4 6 6v7H7z;fb M9 6h5v8l-5-2z', mirrorCv: 'fw M2 2l7 2v10l-7-2zM9 4l6-2v10l-6 2z;sr o 8 8 3.500;sb M8 2v12', cylRed: 'fb M2 3h6v11H2z;fl M8 2h3v12H8z;tr M15 2l-3 6 3 5', surfP: 'ft M1 9l7-7 7 4-6 8z',
  datum: 'fg M3 5h9v8H3z;fg o 11 10 4.500;sk M3 5h9v8H3z;sk o 11 10 4.500;sr M3 0v6M0 3h6', plane: 'fw M2 1l12 2v12L2 12z', hole: 'fl M0 9l7-7 9 5-7 8z;b3 o 8 8 3', gem: 'fl M1 5l5-4h5l4 5-2 6-5 3-6-4z;sb M1 5l8 2 6-1M9 7l-1 8M9 7L6 1', block: '@cube;fo M2 4l12-1-2 4-10 1z', blend: 'fl M1 12l8-2V2l4-1v9l-5 5z;fy M5 11c4 0 6-4 6-9l4 1c0 7-4 12-8 12z', blendLine: 'fc M8 2l4 1v9l-6 2z;to M3 13c5 0 7-3 8-10', chamfer: 'fc M1 4l8-3 6 3-8 3z;ft M1 5l6 3v7l-6-2zM7 8l8-4v8l-8 3z;fe M6 3l8 1-3 3z', draft: 'fo M1 6l6-4 8 2v9l-7 2-7-3z;sk M4 6l5 1v7;b2 M9 5l6-1v9l-6 2z', spring: 'fw M4 1h8v14H4z;sn M4 1h8v14H4z;sk M2 5h12M2 8h12M2 11h12M8 1v14', trimBody: 'fy M7 1h4v6H7z;fb M1 7l5-1v8l-5-1zM8 8l7-1v5l-6 3z;so M1 6h14', split: 'fo M5 1h4v5l6 2v5l-8-2z;fb M1 9l6-2v6l4 1-5 1z', book: 'fb M1 2h6v13H1zM9 2h6v13H9z;fw M3 3h4v11H3zM9 3h4v11H9z;sr M8 1v14', shell: 'fc M1 3l12-2 2 2v10l-8 2-6-3z;fo M4 7h8l-1 7-6-1z;fc M6 9h4l-1 3H7z', thread: 'fl M2 9l5 1 6-9 2 4-6 9-6 1z;to M4 9l6-7', body: 'fp M1 7l6-5 8 2v7l-6 4-8-2z;fl M2 8l7 1v5l-7-2z',
  tubes: 'fl M1 2h5v12H1zM8 6h4v9H8z;fb M4 2h2v12H4zM13 10h2v5h-2z', thicken: 'fc M1 4l10-3 4 3v9l-10 2-4-3z;fy o 8 9 3.500;so M1 4h10v10', pill: 'ft M1 5l3-2h11v8l-3 2H1z;fl M2 6h7v6H2z', cubeHole: 'fb M1 4l7-3 7 3v8l-7 4-7-3z;fl M1 4l7-3 7 3-7 3z;fo o 5 10 2.500', pad2: 'ft M0 8l7-6 9 5-7 7z;fy M5 7l4-3 4 3-4 4z', unite: 'ft M1 4h9v8H1z;fl M8 4h8v8H8z;fo M5 3h5v9H5z', patch: 'fl M1 9l8-6 6 3-8 6z;fl M5 12l8-5 2 3-6 5z', array: '@cube;fo M3 7h2v2H3zM7 7h2v3H7zM3 11h2v2H3zM7 12h2v2H7z', linkAxes: 'fy M2 2h3v4H2zM6 9h4v4H6zM11 10h4v4h-4z;sk M5 1v12h8M5 7h8',
  diamond: 'fp M8 2l7 6-7 6-7-6z;sk M4 5l7 6M12 5l-7 6;fr o 8 2 1.300;fr o 15 8 1.300;fr o 8 14 1.300;fr o 1 8 1.300', diamondPt: '@diamond;fl M5 8l3-3 3 3-3 3z', sheet: 'fl M1 3c5 2 9 0 14 0v5c-3 0-4 1-4 6-3-4-6-4-9-3z;sb M2 7c4 2 7 0 12-1', sheetGrid: '@sheet;sb M6 5v6M10 4v7', rolled: 'fc M2 6l6-5 7 7-6 7z;fo M8 1c4 0 7 3 7 7l-3-1z;sr M4 8l4 4', binocs: 'sk o 6 4 3;sk M6 7v3M3 9h6;fk o 4 13 2.500;fl M8 9l5-1 3 4-5 2z;sg o 4 13 2', sheetSun: 'fl M1 10l5-7 9 3-4 8z;so M6 3v11M2 8l12 2;sr M9 6v3', meshBlue: 'fl M2 3h12l-2 5 2 6H2l2-6z;sb M3 6h11M2 11h11M8 3v11', broom: 'tt M13 1L8 8;fy M2 7l9 1 3 6H1z;so M5 8l-1 6M9 8l1 6',
  quilt: 'fl M1 3l5-1 9 6v6l-5-1-9-5z;sr M3 5l8 6M1 6l12 5M8 4l-3 6', bookOpen: 'fw M1 6l6-3 2 3 6-3v8l-6 3-2-3-6 3z;sk M8 5v7', foldBox: 'ft M1 4l12-3 2 3-11 3z;fo M4 7l11-3v8l-8 3V9l-3 1z', joinBox: 'fb M1 1h5v8H1z;fo M6 6l8-2v9l-7 2z;fy M2 9h6v4H2z', roof: 'fr M0 12l6-9 2 2-6 9z;ft M7 2l9 10-3 3-8-10z;fo M5 11l3-4 4 6z', spot: 'ft M0 12l5-3 10 1-5 4z;fo o 9 6 2;so M5 3h6M4 12l7-1', axisY: 'fy M2 11l6-3 7 3-6 4z;tr M5 9V2M2 4h5;sr o 12 4 2.500', layers: 'fo M1 11l7-4 7 4-7 4z;fy M1 8l7-4 7 4-7 4z;fo M1 5l7-4 7 4-7 4z', foldBlue: 'fl M4 3l9-1-4 12-7 1z;fb M6 10l8-2-3 6-8 1z', foldGold: 'fo M7 1h7v9l-5 5H2l5-5z;fy M7 1h3v9l-4 5H2l5-5z', bendArrow: 'fl M1 8l6 1 4-4 4 2-5 8H2z;fp M11 2h3v3h-3z;sr M12 6V2', cage: 'fl M5 2h7v11H5z;sr M4 3c2-3 8-3 9 0-1 2-8 2-9 0M6 4v10M11 4v10;so M1 13h14v2H1z', arch: 'fo M2 14V6c1-6 11-6 12 0v8h-4V7H7v7z;fc M4 14V6c0-2 4-2 4 0v8z', hook: 'fy M2 4c3-4 12-4 13 0-1 6-4 5-5 10l-5-2 3-5H3z',
  wrench: 'sk o 9 6 5;fy M2 14l6-8 2 2-6 8z;sk M6 4h6', wrenchDoc: 'fp M8 1h6v11H8z;sb o 5 7 3;fy M1 14l5-6 2 2-4 5z', trimCv: 'sk M1 3c6 0 8 3 13 5M1 13c4-1 6-4 13-4;sr M7 2l7 7', cross: 'sk M1 8h14M8 1l1 14;sr M4 4l8 8M5 11l7-6', ess: 'sk M14 2C4 1 11 15 1 14;sr M4 4l8 0M5 12l6 0', quarter: 'fl M2 2h6l6 7v5H2z;sk M2 2h6l6 7v5H2z;so M8 3l5 6', riser: 'tk M2 13l5-1V4;tr M10 14V7l5-4M10 3v4;so M7 8h3', arcs: 'sk M1 4l4 3c4-5 6-3 10-5M2 14c3-7 7-7 13-4;sr M7 5l7 6;to M3 14l4-4',
  gearNet: 'fp M8 2l7 6-7 6-7-6z;fr o 8 2 1.300;fr o 15 8 1.300;fr o 8 14 1.300;so o 7 8 3.500;fy M2 10l5-5 3 2-5 5z', gearNetRed: 'fp M8 2l7 6-7 6-7-6z;fr o 8 2 1.300;fr o 15 8 1.300;so o 8 7 4;sr M1 5l13 2M6 1l2 13;fy M3 12l5-5 2 2-5 5z', rhombus: 'fp M1 8l7-6 7 5-7 7z;sn M3 8l5-4 5 3-5 5z', rhombusArc: 'fp M1 8l7-5 7 5-7 6z;sb M2 9c5-7 8 0 12-2;sr M4 12c2-6 6-2 9-5', gearArc: 'fq M4 7l8-5 2 8-8 5z;sb o 9 7 4;fy M2 13l4-5 2 2-4 5z', ribbon: 'fb M1 2c5-2 8 1 13 0v3c-3 0-4 1-5 3 2 1 4 1 6 3v3c-5 1-9-1-14 0v-3c3 0 4-1 5-3-2-1-3-2-5-3z;fl M3 3c4-1 7 1 10 0-2 1-3 2-5 4M3 13c4-1 7 1 11 0', xcubed: 'sk M1 5l7 9M2 5l7 9M8 5l-7 9;sr M11 1h4l-2 3c3 1 2 4-2 3', ribbonGold: '@ribbon;to M2 7c4 3 8-1 12 2', mirrorB: 'fb M1 5h5v8H1zM10 3h5v8h-5z;sb M8 0v16;fl M4 4h3v8H4z', bar: 'fo M1 11l9-9 5 2-9 9z;fc M3 11l8-8 3 1-8 8z',
  sheetBend: 'fl M1 3l9 1 4 6-8-3-3 3z;so M3 11h11M5 8v6M10 10v5', quadPt: 'fl M2 4l12-2-1 12-10-1z;sr M2 4l12-2-1 12-10-1z;fr o 2 4 1.300;fr o 14 2 1.300;fr o 13 14 1.300;fr o 3 13 1.300', sheetGreen: 'fe M1 8l7-6 7 4-6 8z;sg M4 6l7 5M8 12l5-6', spoon: 'fl M4 1h10v9H4z;ft M6 3h6v5H6z;fy M1 12l7-4 7 4-8 3z', tee: 'ft M1 2l7 3 7-3-2 5 2 8H2l2-8z;sk M4 6h8M8 5v9', netRed: 'fl M2 4l6-3 5 6-6 5z;sr M1 13l12-9M6 5l9 8;sb M3 3l8 12', barGold: 'fo M1 11l8-9 6 4-7 8z;fy M1 11l8-9 2 2-7 9z', bowtie: 'ft M1 3l7 4 7-3v8l-7-2-7 3z;fo M6 6l5 4 4-4-2 6-7-3z', stand: 'ft M1 3l8 3v7l-3 1V8l-2-1v5z;fo M8 2l6 2v11l-3-1V8H8z', sheetTeal: 'fe M1 9l6-6 8 3-6 8z;tr M3 7l3 3M9 5l3 5;sw M5 7h8', pillar: 'so M3 2h10l-3 5v3l4 4H2l4-4V7z;fc M3 2h10l-3 5H6z;fo M6 10h4l4 4H2z;sr M4 2h8M6 7h4M3 14h10', rainbow: 'fe o 8 7 6;fr M8 7l6-3-2-2z;fy M8 7l6-3 1 5z;b1 M8 7l-6-3 4-3z;fp M3 9l5-2-3 8z', rhombusGrid: 'fp M1 7l7-6 7 4-6 9z;sr M3 5l9 5M6 3l8 5M5 11l6-8', cpoints: 'fl M1 3l10-1 4 4-6 1v3l5 1-4 4-8-1z;fb o 4 4 1.500;fb o 4 12 1.500;fb o 13 11 1.500', greenCv: 'fe M1 12c4-3 1-8 5-10l4 1c4 0 3-1 5 0-4 3-1 8-5 10l-4-1z;sg M6 3c-2 3 0 7-3 9M11 4c-2 3 0 7-3 9',
  tAsm: 'fy M1 1h5v5H1zM6 8h5v5H6z;sn M3 6v5h3M6 4h8M11 11h4', tPart: 'sr o 3 4 2.500;sn M3 7v7h12M5 4h10;sr M7 9h3v3H7z;sr M12 11h3', tReuse: 'fb M2 2l4-1v10H2z;fl M1 11l5-1v4H1z;fo M9 2l6-1v7l-3 6-3-4z', tWeb: 'fc M3 1h8l4 4v10H3z;b2 o 8 9 4;fg M6 7h4l-1 4z',
  clock: 'fl o 8 8 7;sn o 8 8 7;fw o 8 8 5.500;sk M8 4v4h4', tList: 'fq M1 3l4-2v13l-4-1z;fs M6 2h9v12H6z;sg M8 5h2M8 8h2M8 11h2;sb M11 5h3M11 8h3M11 11h3', tColor: 'fr M1 1h5v3H1z;fy M1 4h5v4H1z;fg M1 8h5v3H1z;b2 M1 11h5v4H1z;tb M8 6l5 7', tTools: 'tb M2 3v9M6 5v8M2 9h8;tk M8 8l6-5;sk M9 9l6 5', tUsers: 'fo o 11 4 3;fg M7 8h8v6H7z;fo o 5 7 3;fp M1 11h7v4H1z', tScene: 'b2 M1 2h14v12H1z;b1 M1 9l5-2 9 2v5H1z;fy o 12 5 2;sk M1 2h14v12H1z', tChart: 'fs M1 1h14v14H1z;fb M2 3h4v3H2zM10 3h4v3h-4z;sb M6 5h4M4 9v4M9 11h5',
  pin: 'tk M1 15l5-5;fy M4 8c0-5 4-8 8-7 4 1 3 9-2 11-3 1-5-1-6-4z;sk M4 8c0-5 4-8 8-7 4 1 3 9-2 11-3 1-5-1-6-4z;sk M7 3c3 1 5 3 4 8', nViews: 'sg M2 4l6-3 6 3v8l-6 3-6-3zM2 4l6 4 6-4M8 8v7M8 1v7l-6 4M8 8l6 4;tr M11 15l5-2', tick: 'tg M2 8l4 5 8-10', nCam: 'fp M3 4l8-3 5 5-1 7-6 2z;sr M1 5l9-2v10l-9 2z;sb o 7 8 3;fb M12 6h3v5h-3z', folder: 'fc M1 4h5l1 2h7v8H1z;fy M4 8h12l-3 6H1z', folderEq: 'fc M1 5h5l1 2h7v8H1z;fy M3 8h11l-1 7H1z;sk M11 1h5M11 4h5', nCsys: 'fl M5 4l9 4-4 6-5-3z;sr M2 1v9l10 4M2 10l12-6;fr o 2 2 1.300;fr o 14 4 1.300;fr o 12 14 1.300',
  chevL: 'tb M10 4L6 8l4 4', chevR: 'tb M6 4l4 4-4 4', vee: 'tn M3 4l5 8 5-8', lt: 'tn M11 3L5 8l6 5', gt: 'tn M5 3l6 5-6 5', arrowSE: 'tw M3 3l7 7;tw M12 6v7H6', close: 'tw M3 3l10 10M13 3L3 13', down: 'fk M6 2h4v5h4l-6 7-6-7h4z',
  aFind: 'fk M1 2l5-1 4 3-1 3-4-2zM8 3l3-1-1 4z;fy M6 8l5-2 4 3v5l-5 1-4-2z', aOpen: 'fy M2 3h5v4H2zM7 9l4-2 4 2v5l-4 1-4-2z;sg M2 3l4-2 4 4', aBox: 'fo M1 1h14v14H1z;fc M2 2h12v12H2z;fy M6 3h4v4h3v5H5V9H4z;sk M1 1h14v14H1z', aOutline: 'fl M1 3l5-2 3 3 6 3v6l-6 2-7-3z;sb M3 4l5 2v6h6', aSave: 'ft M1 2l6-1 5 5-5 5z;fd M6 7h9v8H6z;fw M8 12h4v3H8z;sk M2 3l5 3', aGrey: 'fn M2 2l5-1 2 4 6 3v6l-6 1-3-5H2z', aAdd: 'fy M2 2h5v5H2zM2 9l6-2 3 3v4l-5 1-4-2z;tb M12 1v6M9 4h6', aAdd2: 'fe M2 1h5v5H2z;fy M2 8l6-2 3 3v5l-5 1-4-2z;tb M13 1v6M10 4h6', aPins: 'fy M2 2h3v3H2zM6 7h3v7H6zM11 9h3v6h-3z;so M5 3l8 6', aPlate: 'fy M1 9l9-2 5 3v3l-9 2-5-3z;tb M12 1v6M9 4h6', aMove: 'fy M5 6l6-3 2 3-5 5-4-1z;sb M10 3l5-2-1 5;b3 M1 11l4-1v4H1z', mirrorTri: 'b3 M2 1l5 4-5 3zM14 1L9 5l5 3z;sb M8 0v16;fy M1 14l5-5v5z;fr M10 9l5 6h-5z', constrain: 'fr M1 2l6 5-3 1-2 3z;fg M1 8l4 2-4 2z;sr M12 1v6M8 8h7;sb M8 14l6-6M11 15l4-5', mirrorSave: 'b3 M1 5l3 3-3 3zM8 5L5 8l3 3z;fr M2 14l3-3 3 3z;fd M9 1h7v7H9z', aSection: 'fo M9 1l5 2v11l-5-3z;sk M1 6h7v6H1zM4 4v9M9 1v14', aReplace: 'fy M1 1h6v6H1zM5 7h4v4H5z;fl M8 9l7-1v6l-6 1z', aWrench: 'fl M8 1h7v6H8z;fy M1 14l8-8 2 3-7 5z', aWrench2: 'fy M7 2h4v4h4v4H9L2 15l-1-3 6-5z', aSeq: 'fy M1 1h5v5H1zM1 9h6v5H1zM9 9h6v5H9z', chain: 'fw M10 1h5v5h-5z;sk M8 5h3v3H7zM10 1h5v5h-5z;sr M2 9h5v5H2z', aBody: 'fl M2 4l6-3 6 3-1 9-6 2-5-3z;fy M6 2l6 1-1 5-4 1z', aWindow: 'fs M1 2h14v13H1z;b2 M1 1h14v4H1z;fy M4 7l4-1 3 3-3 5-4-2z', link: 'so M5 1c4-2 6 2 4 5-3 3-7 1-6-2zM7 7c4-2 6 2 4 5-3 4-7 1-6-2z;sy M6 3c2-1 3 1 2 2M8 9c2-1 3 1 2 2', lozenge: 'fy M5 1h6l4 7-4 7H5L1 8z;b3 M8 4l4 4-4 4-4-4z;fw M8 6l2 2-2 2z', linkInfo: 'so o 5 4 3;sn o 6 8 3;fw M8 7h7v8H8z;tk M12 10v4M12 8v1', treeInfo: 'sk M1 9h6l3-6h5M7 8l3-2h5M6 10h9;fs M9 9h6v6H9z;sb M12 10v4', aCheck: 'fy M3 3h6v9H3z;sr M1 2h10M6 0v5;tg M6 12l3 3 6-8', 
  gLink: 'fn M1 4l6-2v11l-6 1zM8 7l5 2-1 5H8z;sn o 12 5 3;sn o 12 11 3', snap: 'sr M1 1h14v14H1z;sk M7 2v11M2 8h10;fo M8 9l7-1-3 6z', back: 'tn M14 4c1 6-6 8-12 6M6 6l-4 4 5 3', gBlob: 'fn M1 8l6-5 8 3v6l-6 3-7-2z', gCross: 'tn M1 5c4-5 9-3 6 1;sn M11 4v11M6 10h10;sn o 11 10 3', gPipe: 'fn M1 3c6-2 9 0 10 4h4v8h-5V9H7l-2-3z', marquee: 'sn M1 2h2M6 2h2M11 2h3M1 14h2M6 14h2M11 14h3M1 4v2M1 9v3M15 4v2M15 9v3;fn o 1 2 1;fn o 15 2 1;fn o 1 14 1;fn o 15 14 1', cubeTop: '@shadeEdge;sr M1 5l5-3 9 1'
};

const parts = (src) => src.split(';').filter((p) => p.trim()).map((p) => {
  p = p.trim();
  if (p[0] === '@') return parts(ICONS[p.slice(1)]);
  const cut = p.indexOf(' ');
  const paint = p.slice(0, cut);
  const geo = p.slice(cut + 1);
  if (geo[0] !== 'o') return `<path class="${paint}" d="${geo}"/>`;
  const [, x, y, r] = geo.split(' ');
  return `<circle class="${paint}" cx="${x}" cy="${y}" r="${r}"/>`;
}).join('');

const icon = (name) => `<svg class="i" width="16" height="16" viewBox="0 0 16 16" aria-hidden="true">${parts(ICONS[name])}</svg>`;

const MARKS = {
  '|': '<span class="sep"></span>',
  '::': '<span class="grip"></span>',
  'v': '<button class="caret" aria-label="更多"></button>',
  'V': '<button class="caret low" aria-label="工具条选项"></button>',
  '>>': '<button class="more" aria-label="其他按钮">»</button>'
};

document.querySelectorAll('[data-tools]').forEach((bar) => {
  bar.innerHTML = bar.dataset.tools.split(' ').map((t) => {
    if (MARKS[t]) return MARKS[t];
    const pressed = t[0] === '*';
    const name = pressed ? t.slice(1) : t;
    return `<button class="tool${pressed ? ' pressed' : ''}" aria-label="${name}">${icon(name)}</button>`;
  }).join('');
});

document.querySelectorAll('[data-icon]').forEach((el) => { el.innerHTML = icon(el.dataset.icon); });
```
